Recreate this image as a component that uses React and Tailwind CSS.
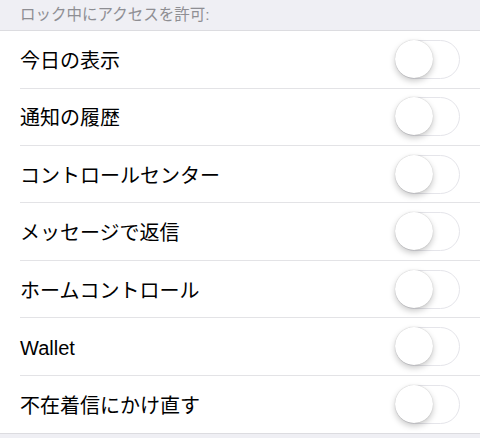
import React, { useState } from 'react';

const items = [
  '今日の表示',
  '通知の履歴',
  'コントロールセンター',
  'メッセージで返信',
  'ホームコントロール',
  'Wallet',
  '不在着信にかけ直す',
];

const Toggle = ({ on, onChange }) => (
  <button
    onClick={onChange}
    className={`relative w-[65px] h-[39px] rounded-full border-[1.5px] shrink-0 transition-colors ${
      on ? 'bg-[#4cd964] border-[#4cd964]' : 'bg-white border-[#e5e5ea]'
    }`}
  >
    <span
      className={`absolute top-[-1px] w-[38px] h-[38px] rounded-full bg-white shadow-[0_3px_6px_rgba(0,0,0,0.22),0_0_1px_rgba(0,0,0,0.25)] transition-all ${
        on ? 'left-[25px]' : 'left-[-1px]'
      }`}
    />
  </button>
);

const App = () => {
  const [states, setStates] = useState(items.map(() => false));

  const toggle = (i) => {
    setStates(prev => prev.map((v, j) => (j === i ? !v : v)));
  };

  return (
    <div
      className="w-[480px] h-[438px] bg-[#efeff4] overflow-hidden"
      style={{ fontFamily: '"Liberation Sans", "Noto Sans CJK JP", sans-serif' }}
    >
      <div className="h-[31.3px] pl-5 flex items-start pt-[5px] border-b border-[#dcdce0]">
        <span className="text-[15.5px] leading-[20px] text-[#8e8e93]">ロック中にアクセスを許可:</span>
      </div>

      <div className="bg-white border-b border-[#dcdce0]">
        {items.map((label, i) => (
          <div key={label} className="pl-5">
            <div
              className={`h-[57.4px] flex items-center justify-between pr-5 ${
                i < items.length - 1 ? 'border-b border-[#e3e3e6]' : ''
              }`}
            >
              <span className="text-[20px] leading-[24px] text-black mt-[3px]">{label}</span>
              <Toggle on={states[i]} onChange={() => toggle(i)} />
            </div>
          </div>
        ))}
      </div>
    </div>
  );
};

export default App;
